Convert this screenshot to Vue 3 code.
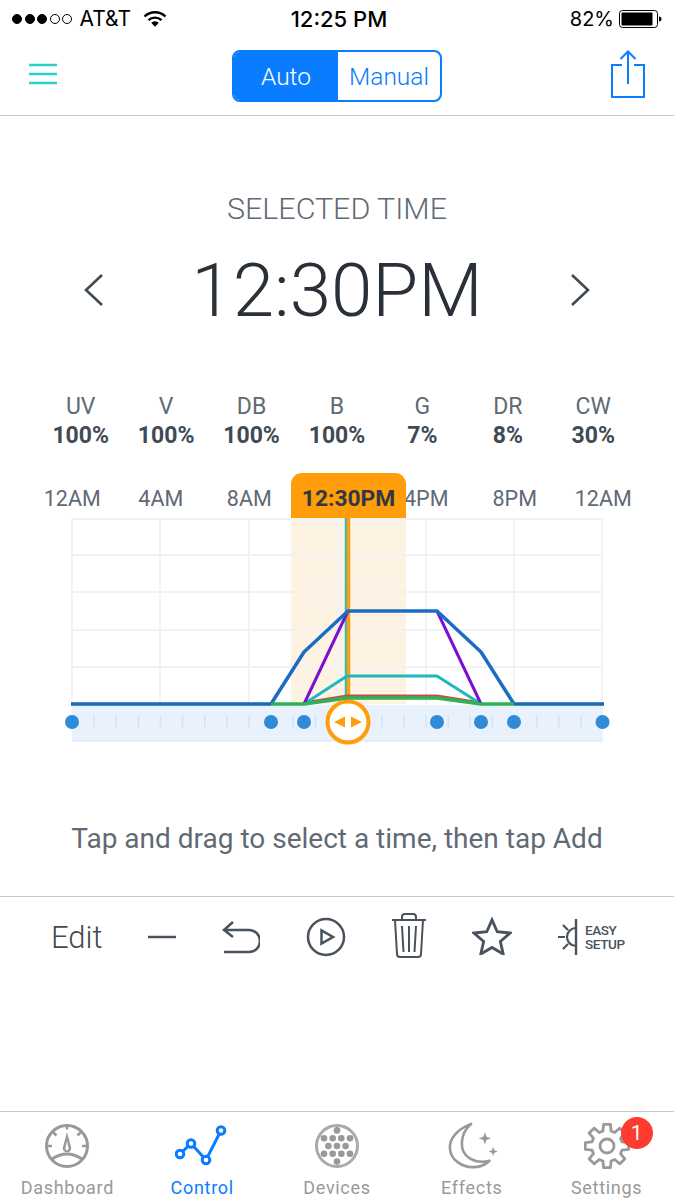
<template>
  <div class="screen">
    <!-- status bar -->
    <div class="status">
      <div class="status-left">
        <span v-for="n in 5" :key="n" class="sig" :class="{ on: n <= 3 }"></span>
        <span class="carrier">AT&amp;T</span>
        <svg class="wifi" width="24" height="18" viewBox="0 0 24 18">
          <path d="M1.5 6.5a15 15 0 0 1 21 0" fill="none" stroke="#000" stroke-width="2.4" />
          <path d="M5.5 10.2a9.4 9.4 0 0 1 13 0" fill="none" stroke="#000" stroke-width="2.4" />
          <path d="M8.2 12.8L12 16.8l3.8-4a5.4 5.4 0 0 0-7.6 0z" fill="#000" />
        </svg>
      </div>
      <div class="clock">12:25 PM</div>
      <div class="status-right">
        <span class="pct">82%</span>
        <svg width="43" height="18" viewBox="0 0 43 18">
          <rect x="0.5" y="0.5" width="38" height="17" rx="3" fill="none" stroke="#000" />
          <rect x="2.5" y="2.5" width="31" height="13" rx="1" fill="#000" />
          <path d="M40 6.500c1.500 0 2.500 1 2.500 2.500s-1 2.500-2.500 2.500z" fill="#000" />
        </svg>
      </div>
    </div>

    <!-- nav -->
    <div class="nav">
      <svg class="nav-menu" width="28" height="22" viewBox="0 0 28 22">
        <path d="M0 2h28M0 11h28M0 20h28" stroke="#2bcfc9" stroke-width="2.400" />
      </svg>
      <div class="toggle">
        <div class="seg seg-on">Auto</div>
        <div class="seg">Manual</div>
      </div>
      <svg class="nav-share" width="36" height="48" viewBox="0 0 36 48">
        <path d="M12 15H2v32h32V15H24" fill="none" stroke="#0a7cff" stroke-width="2" />
        <path d="M18 34V2M10.500 9L18 1.500 25.500 9" fill="none" stroke="#0a7cff" stroke-width="2" />
      </svg>
    </div>

    <div class="selected-label">SELECTED TIME</div>
    <div class="time-row">
      <svg width="22" height="34" viewBox="0 0 22 34">
        <path d="M19 2L3 17l16 15" fill="none" stroke="#3f4a54" stroke-width="2.600" />
      </svg>
      <div class="time">12:30PM</div>
      <svg width="22" height="34" viewBox="0 0 22 34">
        <path d="M3 2l16 15L3 32" fill="none" stroke="#3f4a54" stroke-width="2.600" />
      </svg>
    </div>

    <!-- channels -->
    <div class="channels">
      <div v-for="c in channels" :key="c.name" class="channel">
        <div class="ch-name">{{ c.name }}</div>
        <div class="ch-val">{{ c.value }}</div>
      </div>
    </div>

    <!-- schedule chart -->
    <div class="hours">
      <span v-for="(h, i) in hours" :key="i" class="hour">{{ h }}</span>
      <div class="badge">12:30PM</div>
    </div>
    <svg class="chart" width="674" height="260" viewBox="0 518 674 260">
      <rect x="291" y="518" width="115" height="186" fill="#fef3e3" />
      <g stroke="#f1f2f6" stroke-width="2" fill="none">
        <path v-for="x in gridX" :key="x" :d="`M${x} 518V704`" />
        <path v-for="y in gridY" :key="y" :d="`M72 ${y}H603`" />
      </g>
      <rect x="72" y="705" width="531" height="36" fill="#e8f1fc" />
      <path d="M72 741H603" stroke="#d6e6f8" stroke-width="1" />
      <path v-for="x in ticks" :key="x" :d="`M${x} 715V729`" stroke="#d3e4f5" stroke-width="1.500" />
      <path d="M346 518V704" stroke="#2dbcc0" stroke-width="2.500" />
      <path d="M348.500 518V704" stroke="#ff9d0a" stroke-width="3.500" />
      <g fill="none" stroke-width="3" stroke-linejoin="round">
        <path d="M304 703L347 696H437L481 703" stroke="#c0504d" />
        <path d="M304 704L347 676H437L481 704" stroke="#1db8c0" />
        <path d="M304 704L348 611M437 611L481 704" stroke="#7a10d0" />
        <path d="M271 704L304 652L348 611H437L481 652L514 704" stroke="#1c6cc4" stroke-width="3.500" />
        <path d="M271 704H304L347 698H437L481 704H514" stroke="#2fb356" stroke-width="3.500" />
      </g>
      <path d="M71 704H271M514 704H604" stroke="#1769b8" stroke-width="3.500" />
      <circle v-for="x in dots" :key="x" :cx="x" cy="722" r="7" fill="#2f8ad8" />
      <circle cx="348" cy="722" r="20.500" fill="#fff" stroke="#ff9d0a" stroke-width="4" />
      <path d="M334 722l11-5.500v11zM362 722l-11-5.500v11z" fill="#ff9d0a" />
    </svg>

    <div class="hint">Tap and drag to select a time, then tap Add</div>

    <!-- actions -->
    <div class="actions">
      <span class="edit">Edit</span>
      <svg class="act-minus" width="28" height="4" viewBox="0 0 28 4">
        <path d="M0 2h28" stroke="#48535d" stroke-width="2.500" />
      </svg>
      <svg class="act-undo" width="40" height="34" viewBox="0 0 40 34">
        <path d="M13 2L4 10l9 7M4 10h25a11 11 0 0 1 0 22H4" fill="none" stroke="#48535d" stroke-width="2.500" />
      </svg>
      <svg class="act-play" width="40" height="40" viewBox="0 0 40 40">
        <circle cx="20" cy="20" r="18" fill="none" stroke="#48535d" stroke-width="2.500" />
        <path d="M15.500 13.500v13L27 20z" fill="none" stroke="#48535d" stroke-width="2.500" />
      </svg>
      <svg class="act-trash" width="36" height="46" viewBox="0 0 36 46">
        <path d="M1 7h34M4 7l2 34q0 3 3 3h18q3 0 3-3l2-34M11 7V4q0-3 3-3h8q3 0 3 3v3" fill="none" stroke="#48535d" stroke-width="2" />
        <path d="M11 13l1.500 26M18 13v26M25 13l-1.500 26" fill="none" stroke="#48535d" stroke-width="2" />
      </svg>
      <svg class="act-star" width="40" height="38" viewBox="0 0 42 40">
        <path d="M21 3l5.500 12.500 13.500 1.300-10.200 9 3 13.200L21 32l-11.800 7 3-13.200-10.200-9 13.500-1.300z" fill="none" stroke="#48535d" stroke-width="3" stroke-linejoin="miter" />
      </svg>
      <div class="easy">
        <svg width="22" height="38" viewBox="0 0 22 38">
          <path d="M19 1v36" stroke="#48535d" stroke-width="2.400" />
          <path d="M19 10a9 9 0 0 0 0 18" fill="none" stroke="#48535d" stroke-width="2.200" />
          <path d="M1 19h7M6 7l5 5M6 31l5-5" stroke="#48535d" stroke-width="2.200" />
        </svg>
        <div class="easy-text">EASY<br />SETUP</div>
      </div>
    </div>

    <!-- tabs -->
    <div class="tabs">
      <div class="tab">
        <svg width="46" height="46" viewBox="0 0 46 46">
          <circle cx="23" cy="23" r="20.500" fill="none" stroke="#999" stroke-width="3" />
          <path d="M8 36Q23 26 38 36" fill="none" stroke="#999" stroke-width="3" />
          <path d="M3 23h5M38 23h5M9 9l3.500 3.500M37 9l-3.500 3.500M23 2.500v4" stroke="#999" stroke-width="2.500" />
          <path d="M23 9l-4 15a4.200 4.200 0 1 0 8 0zM23 18l-1.500 7a1.600 1.600 0 1 0 3 0z" fill="#999" fill-rule="evenodd" />
        </svg>
        <span class="tab-label">Dashboard</span>
      </div>
      <div class="tab tab-on">
        <svg width="54" height="46" viewBox="0 0 54 46">
          <path d="M5 31L16 20.500 31 37 46 7.500" fill="none" stroke="#0a7cff" stroke-width="3" />
          <g fill="#fff" stroke="#0a7cff" stroke-width="3">
            <circle cx="5" cy="31" r="3.800" />
            <circle cx="16" cy="20.500" r="3.800" />
            <circle cx="31" cy="37" r="3.800" />
            <circle cx="46" cy="7.500" r="3.800" />
          </g>
        </svg>
        <span class="tab-label">Control</span>
      </div>
      <div class="tab">
        <svg width="46" height="46" viewBox="0 0 46 46">
          <circle cx="23" cy="23" r="20.500" fill="none" stroke="#aaa" stroke-width="3" />
          <circle v-for="d in ledDots" :key="d.k" :cx="d.x" :cy="d.y" r="3.300" fill="#999" />
        </svg>
        <span class="tab-label">Devices</span>
      </div>
      <div class="tab">
        <svg class="moon" width="46" height="46" viewBox="0 0 46 50">
          <path d="M22 1C7 7-2 17-1 28c1 12 13 20 25 20 8 0 14-3 18-7-16 4-31-4-30-20 .5-8 4-15 10-20z" fill="#fff" stroke="#999" stroke-width="2.800" stroke-linejoin="round" />
          <path d="M37 10l1.700 5 5 1.700-5 1.700-1.700 5-1.700-5-5-1.700 5-1.700zM46 26l1.300 3.700 3.700 1.300-3.700 1.300-1.300 3.700-1.300-3.700-3.700-1.300 3.700-1.300z" fill="#999" />
        </svg>
        <span class="tab-label">Effects</span>
      </div>
      <div class="tab">
        <div class="gear-wrap">
          <svg width="46" height="46" viewBox="0 0 46 46">
            <path :d="gearPath" fill="none" stroke="#999" stroke-width="2.800" stroke-linejoin="round" />
            <circle cx="23" cy="23" r="7" fill="none" stroke="#999" stroke-width="2.800" />
          </svg>
          <span class="tab-badge">1</span>
        </div>
        <span class="tab-label">Settings</span>
      </div>
    </div>
  </div>
</template>

<script setup>
const channels = [
  { name: 'UV', value: '100%' },
  { name: 'V', value: '100%' },
  { name: 'DB', value: '100%' },
  { name: 'B', value: '100%' },
  { name: 'G', value: '7%' },
  { name: 'DR', value: '8%' },
  { name: 'CW', value: '30%' },
]

const hours = ['12AM', '4AM', '8AM', '', '4PM', '8PM', '12AM']

const gridX = [72, 160, 249, 337, 426, 514, 602]
const gridY = [519, 555, 592, 630, 667]
const ticks = Array.from({ length: 25 }, (_, i) => 72 + i * 22.125)
const dots = [72, 271, 304, 437, 481, 514, 602.5]

// 1, 4, 3, 4, 1 rows
const ledDots = []
const rows = [[0], [-13, -4.300, 4.300, 13], [-8.600, 0, 8.600], [-13, -4.300, 4.300, 13], [0]]
rows.forEach((row, r) => {
  row.forEach((dx, i) => {
    ledDots.push({ k: `${r}-${i}`, x: 23 + dx, y: 23 + (r - 2) * 7.800 })
  })
})

// gear outline, 8 teeth
const gearPoints = []
for (let i = 0; i < 8; i++) {
  const a = (i * Math.PI) / 4 - Math.PI / 2
  const step = Math.PI / 4
  gearPoints.push([a - step * 0.34, 15.500])
  gearPoints.push([a - step * 0.2, 22])
  gearPoints.push([a + step * 0.2, 22])
  gearPoints.push([a + step * 0.34, 15.500])
}
const gearPath =
  gearPoints
    .map(([a, r], i) => `${i ? 'L' : 'M'}${(23 + r * Math.cos(a)).toFixed(1)} ${(23 + r * Math.sin(a)).toFixed(1)}`)
    .join('') + 'Z'
</script>

<style>
html,
body {
  margin: 0;
  background: #fff;
}
</style>

<style scoped>
.screen {
  width: 674px;
  height: 1200px;
  display: flex;
  flex-direction: column;
  background: #fff;
  font-family: Roboto, "Liberation Sans", sans-serif;
  overflow: hidden;
}

.status {
  height: 37px;
  padding: 0 12px;
  display: grid;
  grid-template-columns: 1fr auto 1fr;
  align-items: center;
  font-family: Inter, sans-serif;
  font-size: 21px;
  color: #000;
  box-sizing: border-box;
}

.status-left {
  display: flex;
  align-items: center;
  gap: 2px;
}

.sig {
  width: 8px;
  height: 8px;
  border: 1px solid #000;
  border-radius: 50%;
  margin-right: 0.5px;
}

.sig.on {
  background: #000;
}

.carrier {
  margin-left: 5px;
  font-weight: 400;
}

.wifi {
  margin-left: 10px;
}

.clock {
  margin-left: 4px;
  font-size: 22px;
  font-weight: 500;
}

.status-right {
  display: flex;
  align-items: center;
  justify-content: flex-end;
  gap: 5px;
}

.pct {
  font-size: 20px;
}

.nav {
  height: 78px;
  padding: 0 29px;
  display: grid;
  grid-template-columns: 1fr auto 1fr;
  align-items: center;
  border-bottom: 1px solid #c8c8c8;
}

.nav-menu {
  margin-bottom: 5px;
}

.nav-share {
  justify-self: end;
  margin-right: -1px;
  margin-bottom: 4px;
}

.toggle {
  width: 210px;
  height: 52px;
  box-sizing: border-box;
  display: flex;
  border: 2px solid #0a7cff;
  border-radius: 8px;
  overflow: hidden;
  font-size: 24.5px;
  font-weight: 300;
  color: #0a7cff;
}

.seg {
  flex: 1;
  display: flex;
  align-items: center;
  justify-content: center;
}

.seg-on {
  flex: none;
  width: 104px;
  background: #0a7cff;
  color: #fff;
}

.selected-label {
  margin-top: 76px;
  text-align: center;
  font-size: 30.4px;
  line-height: 34px;
  font-weight: 300;
  color: #5f6a74;
}

.time-row {
  margin-top: 19px;
  padding: 0 83px;
  height: 90px;
  display: flex;
  align-items: center;
  justify-content: space-between;
}

.time {
  font-size: 74.5px;
  font-weight: 300;
  color: #2a3038;
}

.channels {
  margin-top: 58px;
  padding: 0 38px;
  display: grid;
  grid-template-columns: repeat(7, 1fr);
  text-align: center;
}

.ch-name {
  font-size: 23px;
  line-height: 28px;
  color: #5f6a74;
}

.ch-val {
  font-size: 23px;
  line-height: 29px;
  font-weight: 700;
  color: #3f4a54;
}

.hours {
  position: relative;
  margin-top: 23px;
  margin-left: 28px;
  width: 619.5px;
  height: 45px;
  box-sizing: border-box;
  padding-top: 6px;
  display: grid;
  grid-template-columns: repeat(7, 1fr);
  align-items: center;
  text-align: center;
}

.hour {
  font-size: 21.5px;
  color: #5f6a74;
}

.badge {
  position: absolute;
  left: 263px;
  top: 0;
  width: 115px;
  height: 45px;
  box-sizing: border-box;
  padding-top: 6px;
  display: flex;
  align-items: center;
  justify-content: center;
  background: #ff9d0a;
  border-radius: 11px 11px 0 0;
  font-size: 22.8px;
  font-weight: 700;
  color: #2f3943;
}

.chart {
  display: block;
}

.hint {
  margin-top: 45px;
  text-align: center;
  font-size: 28px;
  line-height: 32px;
  color: #5f6a74;
}

.actions {
  margin-top: 41px;
  height: 80px;
  padding-left: 51px;
  border-top: 1px solid #c8c8c8;
  display: flex;
  align-items: center;
}

.edit {
  width: 52px;
  font-size: 31px;
  font-weight: 300;
  color: #3f4a54;
}

.act-minus {
  margin-left: 45px;
}

.act-undo {
  margin-left: 44px;
}

.act-play {
  margin-left: 46px;
}

.act-trash {
  margin-left: 45px;
  margin-bottom: 3px;
}

.act-star {
  margin-left: 44.5px;
  margin-bottom: 3px;
}

.easy {
  margin-left: 45.5px;
  display: flex;
  align-items: center;
  gap: 6px;
}

.easy-text {
  font-size: 13.5px;
  line-height: 14px;
  font-weight: 500;
  color: #48535d;
  letter-spacing: -0.4px;
}

.tabs {
  margin-top: auto;
  height: 88px;
  border-top: 1px solid #c8c8c8;
  display: grid;
  grid-template-columns: repeat(5, 1fr);
}

.tab {
  display: flex;
  flex-direction: column;
  align-items: center;
  padding-top: 11px;
  color: #999;
}

.tab svg {
  display: block;
}

.tab svg.moon {
  overflow: visible;
}

.tab-on {
  color: #0a7cff;
}

.tab-label {
  margin-top: 8px;
  font-size: 18px;
  line-height: 22px;
  letter-spacing: 0.7px;
}

.gear-wrap {
  position: relative;
}

.tab-badge {
  position: absolute;
  left: 37px;
  top: -6px;
  width: 32px;
  height: 32px;
  border-radius: 50%;
  background: #ff3b30;
  color: #fff;
  font-size: 21px;
  line-height: 32px;
  text-align: center;
}
</style>
